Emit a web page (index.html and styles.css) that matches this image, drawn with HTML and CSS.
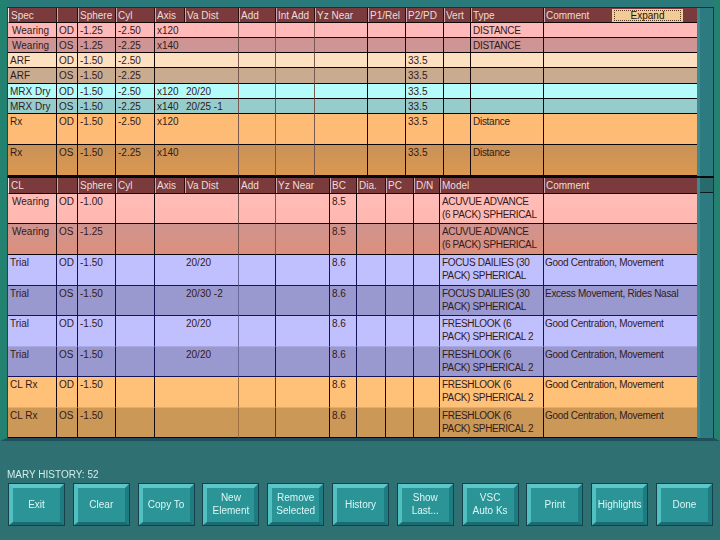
FILE: index.html
```html
<!DOCTYPE html>
<html lang="en">
<head>
<meta charset="utf-8">
<title>Mary History</title>
<link rel="stylesheet" href="styles.css">
</head>
<body>
<div class="screen">
  <main class="panel">
    <section class="section first">
      <table class="grid spec">
        <colgroup><col class="w48"><col class="w21"><col class="w38"><col class="w39"><col class="w30"><col class="w54"><col class="w37"><col class="w39"><col class="w53"><col class="w38"><col class="w38"><col class="w27"><col class="w73"><col class="w154"></colgroup>
        <thead><tr class="h15"><th>Spec</th><th></th><th>Sphere</th><th>Cyl</th><th>Axis</th><th>Va Dist</th><th>Add</th><th>Int Add</th><th>Yz Near</th><th>P1/Rel</th><th>P2/PD</th><th>Vert</th><th>Type</th><th><div class="comment-head"><span>Comment</span><button class="expand"><span class="focus">Expand</span></button></div></th></tr></thead>
        <tbody>
          <tr class="h15 pink"><td class="ind">Wearing</td><td>OD</td><td>-1.25</td><td>-2.50</td><td>x120</td><td></td><td></td><td></td><td></td><td></td><td></td><td></td><td>DISTANCE</td><td></td></tr>
          <tr class="h15 pink-d"><td class="ind">Wearing</td><td>OS</td><td>-1.25</td><td>-2.25</td><td>x140</td><td></td><td></td><td></td><td></td><td></td><td></td><td></td><td>DISTANCE</td><td></td></tr>
          <tr class="h15 cream"><td>ARF</td><td>OD</td><td>-1.50</td><td>-2.50</td><td></td><td></td><td></td><td></td><td></td><td></td><td>33.5</td><td></td><td></td><td></td></tr>
          <tr class="h16 cream-d"><td>ARF</td><td>OS</td><td>-1.50</td><td>-2.25</td><td></td><td></td><td></td><td></td><td></td><td></td><td>33.5</td><td></td><td></td><td></td></tr>
          <tr class="h15 cyan"><td>MRX Dry</td><td>OD</td><td>-1.50</td><td>-2.50</td><td>x120</td><td>20/20</td><td></td><td></td><td></td><td></td><td>33.5</td><td></td><td></td><td></td></tr>
          <tr class="h15 cyan-d"><td>MRX Dry</td><td>OS</td><td>-1.50</td><td>-2.25</td><td>x140</td><td>20/25 -1</td><td></td><td></td><td></td><td></td><td>33.5</td><td></td><td></td><td></td></tr>
          <tr class="h31 orange"><td>Rx</td><td>OD</td><td>-1.50</td><td>-2.50</td><td>x120</td><td></td><td></td><td></td><td></td><td></td><td>33.5</td><td></td><td>Distance</td><td></td></tr>
          <tr class="h31 orange-d"><td>Rx</td><td>OS</td><td>-1.50</td><td>-2.25</td><td>x140</td><td></td><td></td><td></td><td></td><td></td><td>33.5</td><td></td><td>Distance</td><td></td></tr>
        </tbody>
      </table>
      <div class="rail"></div>
    </section>
    <section class="section second">
      <table class="grid cl">
        <colgroup><col class="w48"><col class="w21"><col class="w38"><col class="w39"><col class="w30"><col class="w54"><col class="w37"><col class="w54"><col class="w27"><col class="w29"><col class="w28"><col class="w26"><col class="w104"><col class="w154"></colgroup>
        <thead><tr class="h16"><th>CL</th><th></th><th>Sphere</th><th>Cyl</th><th>Axis</th><th>Va Dist</th><th>Add</th><th>Yz Near</th><th>BC</th><th>Dia.</th><th>PC</th><th>D/N</th><th>Model</th><th>Comment</th></tr></thead>
        <tbody>
          <tr class="h30 c-pink"><td class="ind">Wearing</td><td>OD</td><td>-1.00</td><td></td><td></td><td></td><td></td><td></td><td>8.5</td><td></td><td></td><td></td><td class="model"><div class="clip">ACUVUE ADVANCE<br>(6 PACK) SPHERICAL<br>1 LENS</div></td><td></td></tr>
          <tr class="h31 c-pink-d"><td class="ind">Wearing</td><td>OS</td><td>-1.25</td><td></td><td></td><td></td><td></td><td></td><td>8.5</td><td></td><td></td><td></td><td class="model"><div class="clip">ACUVUE ADVANCE<br>(6 PACK) SPHERICAL<br>1 LENS</div></td><td></td></tr>
          <tr class="h31 trial"><td>Trial</td><td>OD</td><td>-1.50</td><td></td><td></td><td>20/20</td><td></td><td></td><td>8.6</td><td></td><td></td><td></td><td class="model"><div class="clip">FOCUS DAILIES (30<br>PACK) SPHERICAL<br>1 LENS</div></td><td>Good Centration, Movement</td></tr>
          <tr class="h30 trial-d"><td>Trial</td><td>OS</td><td>-1.50</td><td></td><td></td><td>20/30 -2</td><td></td><td></td><td>8.6</td><td></td><td></td><td></td><td class="model"><div class="clip">FOCUS DAILIES (30<br>PACK) SPHERICAL<br>1 LENS</div></td><td>Excess Movement, Rides Nasal</td></tr>
          <tr class="h31 trial soft"><td>Trial</td><td>OD</td><td>-1.50</td><td></td><td></td><td>20/20</td><td></td><td></td><td>8.6</td><td></td><td></td><td></td><td class="model"><div class="clip">FRESHLOOK (6<br>PACK) SPHERICAL 2<br>LENS</div></td><td>Good Centration, Movement</td></tr>
          <tr class="h30 trial-d"><td>Trial</td><td>OS</td><td>-1.50</td><td></td><td></td><td>20/20</td><td></td><td></td><td>8.6</td><td></td><td></td><td></td><td class="model"><div class="clip">FRESHLOOK (6<br>PACK) SPHERICAL 2<br>LENS</div></td><td>Good Centration, Movement</td></tr>
          <tr class="h31 rx soft"><td>CL Rx</td><td>OD</td><td>-1.50</td><td></td><td></td><td></td><td></td><td></td><td>8.6</td><td></td><td></td><td></td><td class="model"><div class="clip">FRESHLOOK (6<br>PACK) SPHERICAL 2<br>LENS</div></td><td>Good Centration, Movement</td></tr>
          <tr class="h30 rx-d"><td>CL Rx</td><td>OS</td><td>-1.50</td><td></td><td></td><td></td><td></td><td></td><td>8.6</td><td></td><td></td><td></td><td class="model"><div class="clip">FRESHLOOK (6<br>PACK) SPHERICAL 2<br>LENS</div></td><td>Good Centration, Movement</td></tr>
        </tbody>
      </table>
      <div class="rail rail-head"></div>
    </section>
  </main>
  <footer class="footer">
    <div class="status">MARY HISTORY: 52</div>
    <nav class="buttons">
      <button class="key">Exit</button>
      <button class="key">Clear</button>
      <button class="key">Copy To</button>
      <button class="key">New<br>Element</button>
      <button class="key">Remove<br>Selected</button>
      <button class="key">History</button>
      <button class="key">Show<br>Last...</button>
      <button class="key">VSC<br>Auto Ks</button>
      <button class="key">Print</button>
      <button class="key">Highlights</button>
      <button class="key">Done</button>
    </nav>
  </footer>
</div>
</body>
</html>
```

FILE: styles.css
```css
* { box-sizing: border-box; }
html, body { margin: 0; padding: 0; }
body {
  width: 720px;
  height: 540px;
  overflow: hidden;
  background: #2f7072;
  font-family: "Liberation Sans", Arial, sans-serif;
  font-size: 10px;
}
.screen {
  width: 720px;
  height: 540px;
  display: flex;
  flex-direction: column;
  filter: blur(0.35px);
}
.panel {
  margin: 0;
  padding-top: 7px;
  background: #2a7a7c;
  border-left: 7px solid #23826f;
  border-right: 6px solid #23826f;
  border-bottom: 3px solid #1f4f5c;
  height: 441px;
}
.section {
  display: flex;
  border-left: 1px solid #1a4a50;
  width: 707px;
}
.first { border-top: 1px solid #10363c; }
.second { border-top: 2px solid #050a0c; }
.rail {
  width: 17px;
  background: #2d7a80;
  border-left: 3px solid #3a8a90;
  border-right: 1px solid #0f3a44;
}
.rail-head {
  background: linear-gradient(#2a6a6c 0 14px, #0c1c20 14px 15px, #2d7a80 15px);
}
.grid {
  width: 689px;
  flex: none;
  table-layout: fixed;
  border-collapse: separate;
  border-spacing: 0;
  color: #341a18;
}
.w21 { width: 21px; } .w26 { width: 26px; } .w27 { width: 27px; } .w28 { width: 28px; }
.w29 { width: 29px; } .w30 { width: 30px; } .w37 { width: 37px; } .w38 { width: 38px; }
.w39 { width: 39px; } .w48 { width: 48px; } .w53 { width: 53px; } .w54 { width: 54px; }
.w73 { width: 73px; } .w104 { width: 104px; } .w154 { width: 154px; }
.h15 { height: 15px; } .h16 { height: 16px; } .h30 { height: 30px; } .h31 { height: 31px; }
th {
  padding: 0 2px;
  background: #7b3b3d;
  color: #ecdcd8;
  font-weight: normal;
  font-size: 10px;
  line-height: 13px;
  text-align: left;
  vertical-align: middle;
  white-space: nowrap;
  border-left: 1px solid #2a0c0c;
  border-bottom: 1px solid #120606;
  box-shadow: inset 1px 0 0 #c8a8a8;
}
th:first-child { border-left: 1px solid #f4e4e4; box-shadow: none; }
td {
  padding: 1px 2px 0;
  font-size: 10px;
  line-height: 13px;
  vertical-align: top;
  overflow: hidden;
  white-space: nowrap;
  border-left: 1px solid #14080a;
  border-bottom: 1px solid #0c0606;
}
td:first-child { border-left: 0; padding-left: 2px; }
td.ind { padding-left: 4px; }
td:nth-child(6) { border-left: 0; }
td:nth-child(7), td:nth-child(8) { border-left-color: #7a5a50; }
.spec td:nth-child(9) { border-left-color: #7a5a50; }
td:nth-child(13), td:nth-child(14) { letter-spacing: -0.28px; }
td:nth-child(14) { padding-left: 1px; }
td.model { padding-top: 0; letter-spacing: -0.35px; }
.clip {
  height: 29px;
  padding-top: 1px;
  overflow: hidden;
}

.pink td { background: #ffb9b9; }
.pink-d td { background: #cf9494; }
.cream td { background: #fde0c0; }
.cream-d td { background: #c9ab90; }
.cyan td { background: #b4fcfc; }
.cyan-d td { background: #97cccc; }
.orange td { background: linear-gradient(#ffbb74, #fdbb78); }
.orange-d td { background: linear-gradient(#c89258, #dc9850); }
.c-pink td { background: linear-gradient(#ffbcb8, #ffb8b0); }
.c-pink-d td { background: linear-gradient(#cf9490, #dd8f7c); }
.trial td { background: #c0c0ff; border-color: #14145a; }
.trial-d td { background: #9999cf; border-color: #14145a; }
.trial td:nth-child(7), .trial-d td:nth-child(7) { border-left-color: #6a6aa0; }
.trial td:nth-child(8), .trial-d td:nth-child(8) { border-left-color: #14145a; }
.rx td { background: #ffc078; }
.rx-d td { background: #cb9858; }
.rx td:nth-child(7), .rx-d td:nth-child(7) { border-left-color: #a07040; }
.rx td:nth-child(8), .rx-d td:nth-child(8) { border-left-color: #5a3a20; }
.soft td { border-bottom-color: transparent; }
.trial.soft td { border-bottom-color: #a8a8e4; }
.rx.soft td { border-bottom-color: #e0ac68; }

.comment-head {
  display: flex;
  justify-content: space-between;
  align-items: center;
  height: 14px;
}
.expand {
  width: 71px;
  height: 13px;
  margin-right: 12px;
  padding: 1px 2px;
  border: 0;
  background: #f2cc96;
  font-family: inherit;
  font-size: 10px;
  line-height: 10px;
  color: #24140a;
}
.focus {
  display: block;
  height: 11px;
  line-height: 10px;
  border: 1px dotted #5a3a20;
}

.footer {
  flex: 1;
  display: flex;
  flex-direction: column;
  justify-content: flex-end;
  padding: 0 7px 14px 8px;
}
.status {
  margin-left: -1px;
  margin-bottom: 2px;
  height: 12px;
  line-height: 12px;
  color: #d2ecec;
  font-size: 10px;
}
.buttons {
  display: flex;
  justify-content: space-between;
}
.key {
  width: 57px;
  height: 43px;
  padding: 0 0 2px;
  background: #2a9496;
  color: #dcf6f6;
  font-family: inherit;
  font-size: 10px;
  line-height: 13px;
  text-align: center;
  border-style: solid;
  border-width: 5px 5px 4px 5px;
  border-color: #5cc6c8 #1e7c80 #1a6c72 #52c0c0;
  outline: 1px solid #14424c;
  outline-offset: -1px;
}
```
